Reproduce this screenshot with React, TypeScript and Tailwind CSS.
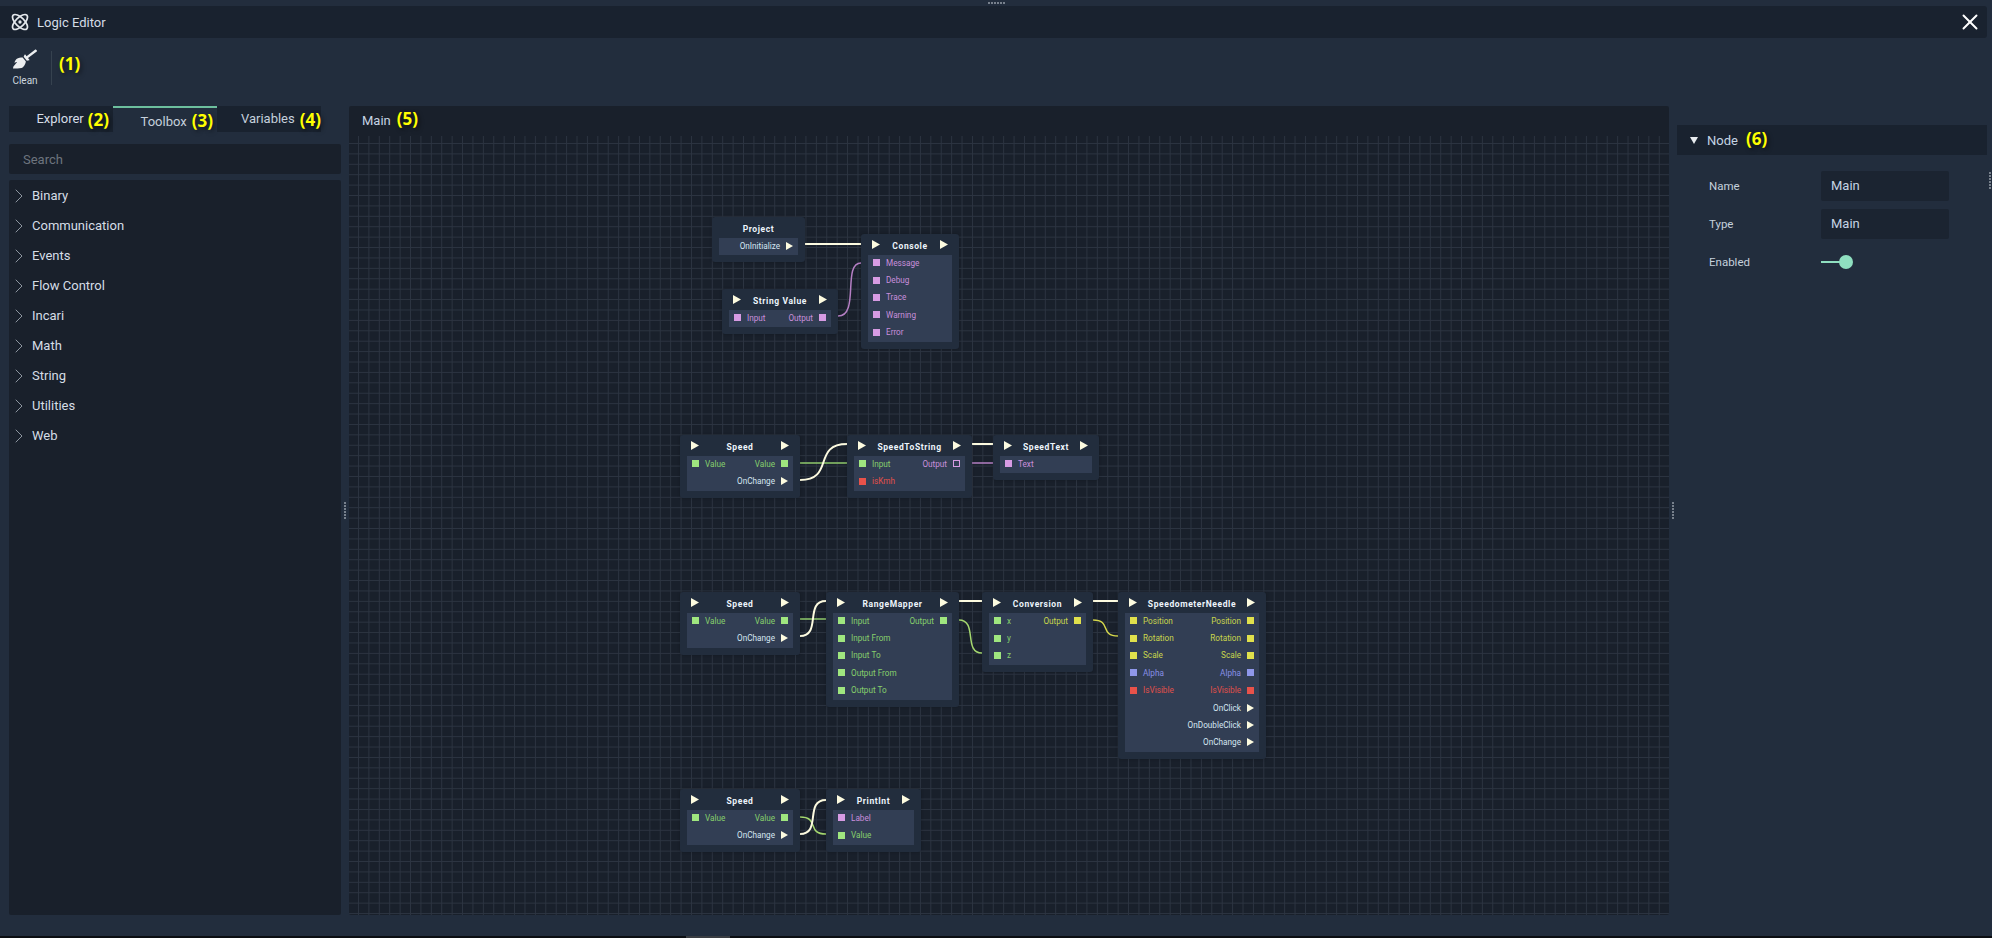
import { Atom, ChevronRight, X } from 'lucide-react';
import { FaBroom } from 'react-icons/fa';

const GREEN = '#9fe67f';
const PINK = '#d79be3';
const RED = '#e8524a';
const BLUE = '#8f97ea';
const YELLOW = '#e0e04c';

type Pin = { label: string; color?: string; text?: string; exec?: boolean; hollow?: boolean };
type Row = { left?: Pin; right?: Pin };
type NodeData = { x: number; y: number; w: number; title: string; noExec?: boolean; rows: Row[] };

const g = (label: string): Pin => ({ label, color: GREEN, text: '#86cf6c' });
const p = (label: string): Pin => ({ label, color: PINK, text: '#c98fdc' });
const y = (label: string): Pin => ({ label, color: YELLOW, text: '#c9d64c' });
const r = (label: string): Pin => ({ label, color: RED, text: '#e0504a' });
const b = (label: string): Pin => ({ label, color: BLUE, text: '#8890e6' });
const e = (label: string): Pin => ({ label, exec: true, text: '#d5e6f2' });

const speedRows: Row[] = [
  { left: g('Value'), right: g('Value') },
  { right: e('OnChange') },
];

const nodes: NodeData[] = [
  { x: 712, y: 217, w: 93, title: 'Project', noExec: true, rows: [{ right: e('OnInitialize') }] },
  { x: 861, y: 234, w: 98, title: 'Console', rows: ['Message', 'Debug', 'Trace', 'Warning', 'Error'].map((l) => ({ left: p(l) })) },
  { x: 722, y: 289, w: 116, title: 'String Value', rows: [{ left: p('Input'), right: p('Output') }] },
  { x: 680, y: 435, w: 120, title: 'Speed', rows: speedRows },
  {
    x: 847, y: 435, w: 125, title: 'SpeedToString',
    rows: [{ left: g('Input'), right: { ...p('Output'), hollow: true } }, { left: r('isKmh') }],
  },
  { x: 993, y: 435, w: 106, title: 'SpeedText', rows: [{ left: p('Text') }] },
  { x: 680, y: 592, w: 120, title: 'Speed', rows: speedRows },
  {
    x: 826, y: 592, w: 133, title: 'RangeMapper',
    rows: [
      { left: g('Input'), right: g('Output') },
      { left: g('Input From') },
      { left: g('Input To') },
      { left: g('Output From') },
      { left: g('Output To') },
    ],
  },
  {
    x: 982, y: 592, w: 111, title: 'Conversion',
    rows: [{ left: g('x'), right: y('Output') }, { left: g('y') }, { left: g('z') }],
  },
  {
    x: 1118, y: 592, w: 148, title: 'SpeedometerNeedle',
    rows: [
      { left: y('Position'), right: y('Position') },
      { left: y('Rotation'), right: y('Rotation') },
      { left: y('Scale'), right: y('Scale') },
      { left: b('Alpha'), right: b('Alpha') },
      { left: r('IsVisible'), right: r('IsVisible') },
      { right: e('OnClick') },
      { right: e('OnDoubleClick') },
      { right: e('OnChange') },
    ],
  },
  { x: 680, y: 789, w: 120, title: 'Speed', rows: speedRows },
  { x: 826, y: 789, w: 95, title: 'PrintInt', rows: [{ left: p('Label'), right: undefined }, { left: g('Value') }] },
];

// wires in page coordinates
const wires: { d: string; c: string; w?: number }[] = [
  { d: 'M805 244 L861 244', c: '#fdfbe0', w: 2 },
  { d: 'M838 316 C860 316 842 263 861 263', c: '#b57fc4' },
  { d: 'M800 463 L847 463', c: '#8fca6c' },
  { d: 'M800 480 C835 480 812 444 847 444', c: '#fdfbe0', w: 2 },
  { d: 'M972 444 L993 444', c: '#fdfbe0', w: 2 },
  { d: 'M972 463 L993 463', c: '#b57fc4' },
  { d: 'M800 619 L826 619', c: '#8fca6c' },
  { d: 'M800 636 C822 636 804 601 826 601', c: '#fdfbe0', w: 2 },
  { d: 'M959 601 L982 601', c: '#fdfbe0', w: 2 },
  { d: 'M959 620 C978 620 963 653 982 653', c: '#a5d86f' },
  { d: 'M1093 601 L1118 601', c: '#fdfbe0', w: 2 },
  { d: 'M1093 620 C1112 620 1099 636 1118 636', c: '#d5d84c' },
  { d: 'M800 817 C820 817 806 834 826 834', c: '#a5d86f' },
  { d: 'M800 834 C822 834 804 800 826 800', c: '#fdfbe0', w: 2 },
];

const categories = ['Binary', 'Communication', 'Events', 'Flow Control', 'Incari', 'Math', 'String', 'Utilities', 'Web'];

function Note({ n }: { n: number }) {
  return (
    <span className="font-['Open_Sans',sans-serif] text-[17px] font-bold leading-none text-[#ffff00] [text-shadow:2px_2px_4px_rgba(0,0,0,0.5)]">
      ({n})
    </span>
  );
}

function Arrow({ size = 8 }: { size?: number }) {
  return (
    <svg width={size} height={size + 1} viewBox="0 0 8 9" className="shrink-0">
      <path d="M0 0 L8 4.5 L0 9 Z" fill="#fdfbe0" />
    </svg>
  );
}

function Port({ pin }: { pin: Pin }) {
  if (pin.exec) return <Arrow size={7} />;
  return (
    <span
      className="block h-[7px] w-[7px] shrink-0 border"
      style={{ backgroundColor: pin.hollow ? 'transparent' : pin.color, borderColor: pin.color }}
    />
  );
}

function LogicNode({ node }: { node: NodeData }) {
  return (
    <div
      className="absolute rounded-[3px] bg-[#222d3d] px-[7px] pb-[7px] shadow-[0_0_3px_rgba(0,0,0,0.25)]"
      style={{ left: node.x - 349, top: node.y - 136, width: node.w }}
    >
      <div className="flex h-[21px] items-center justify-between px-[4px]">
        {node.noExec ? <span /> : <Arrow />}
        <span className="pt-[3px] text-[8.5px] font-bold tracking-[0.6px] text-[#eef5fc]">{node.title}</span>
        {node.noExec ? <span /> : <Arrow />}
      </div>
      <div className="bg-[#323e54]">
        {node.rows.map((row, i) => (
          <div key={i} className="flex h-[17.4px] items-center justify-between px-[5px] pb-[2px] text-[8.2px]">
            {row.left ? (
              <span className="flex items-center gap-[6px]" style={{ color: row.left.text }}>
                <Port pin={row.left} />
                {row.left.label}
              </span>
            ) : (
              <span />
            )}
            {row.right ? (
              <span className="flex items-center gap-[6px]" style={{ color: row.right.text }}>
                {row.right.label}
                <Port pin={row.right} />
              </span>
            ) : null}
          </div>
        ))}
      </div>
    </div>
  );
}

function Grip({ vertical }: { vertical?: boolean }) {
  return (
    <div className={vertical ? 'flex flex-col gap-[1px]' : 'flex gap-[1px]'}>
      {[0, 1, 2, 3, 4, 5].map((i) => (
        <span key={i} className="block h-[2px] w-[2px] bg-[#77808c]" />
      ))}
    </div>
  );
}

function PropRow({ label, value }: { label: string; value: string }) {
  return (
    <div className="flex h-[30px] items-center">
      <span className="w-[144px] pl-[32px] pt-[2px] text-[11.5px] text-[#c5d0dc]">{label}</span>
      <div className="flex h-[30px] w-[128px] items-center rounded-[2px] bg-[#1b2431] pl-[10px] text-[13px] text-[#c5d4e4]">
        {value}
      </div>
    </div>
  );
}

export default function App() {
  return (
    <div className="relative flex h-[938px] w-[1992px] flex-col overflow-hidden bg-[#222d3d] font-['Roboto',sans-serif]">
      <div className="flex h-[6px] shrink-0 items-center justify-center">
        <Grip />
      </div>

      <div className="mr-[5px] flex h-[32px] shrink-0 items-center justify-between rounded-r-[3px] bg-[#19222f] pl-[10px] pr-[4px]">
        <div className="flex items-center gap-[7px]">
          <Atom size={20} className="text-[#e4e8ec]" strokeWidth={2} />
          <span className="pt-[1px] text-[13px] text-[#d5dde6]">Logic Editor</span>
        </div>
        <X size={26} strokeWidth={1.8} className="text-white" />
      </div>

      <div className="flex h-[68px] shrink-0 items-start pl-[12px] pt-[9px]">
        <div className="flex w-[26px] flex-col items-center">
          <FaBroom size={24} className="text-[#eceef0]" />
          <span className="mt-[2px] text-[10px] text-[#ccd5df]">Clean</span>
        </div>
        <div className="ml-[13px] mt-[4px] h-[34px] w-px bg-[#36424f]" />
        <div className="ml-[7px] mt-[6px]">
          <Note n={1} />
        </div>
      </div>

      <div className="flex h-[809px] shrink-0 pl-[9px]">
        <div className="flex w-[332px] shrink-0 flex-col">
          <div className="flex h-[26px] w-[312px] shrink-0">
            <div className="flex w-[104px] items-center justify-end gap-[4px] bg-[#19222f] pr-[4px] text-[13px] text-[#d5dde6]">
              Explorer <Note n={2} />
            </div>
            <div className="flex w-[104px] items-center justify-end gap-[5px] border-t-[2px] border-[#6dbf9e] pr-[4px] text-[13px] text-[#c5d0dc]">
              <span className="pt-[4px]">Toolbox</span> <Note n={3} />
            </div>
            <div className="flex w-[104px] items-center justify-end gap-[5px] bg-[#19222f] text-[13px] text-[#c5d0dc]">
              Variables <Note n={4} />
            </div>
          </div>
          <div className="mt-[12px] flex h-[30px] shrink-0 items-center rounded-[2px] bg-[#19202b] pl-[14px] pt-[2px] text-[13px] text-[#6d747e]">
            Search
          </div>
          <div className="mt-[6px] flex-1 rounded-[2px] bg-[#19202b] pt-[1px]">
            {categories.map((c) => (
              <div key={c} className="flex h-[30px] items-center text-[13px] text-[#d5dde6]">
                <ChevronRight size={24} strokeWidth={0.9} className="ml-[-2px] mr-[1px] text-[#9aa3ad]" />
                {c}
              </div>
            ))}
          </div>
        </div>

        <div className="flex w-[8px] shrink-0 items-center justify-center">
          <Grip vertical />
        </div>

        <div className="flex w-[1320px] shrink-0 flex-col overflow-hidden rounded-[2px] bg-[#19202b]">
          <div className="flex h-[30px] shrink-0 items-center gap-[6px] pl-[13px] text-[13px] text-[#c5d4e4]">
            Main
            <span className="pb-[1px]">
              <Note n={5} />
            </span>
          </div>
          <div className="relative flex-1 bg-[linear-gradient(to_right,#2c3441_1px,transparent_1px),linear-gradient(to_bottom,#2c3441_1px,transparent_1px)] bg-[size:10.42px_10.42px] bg-[position:9px_7px]">
            <svg className="absolute inset-0" width={1320} height={779} viewBox="349 136 1320 779" fill="none">
              {wires.map((wire, i) => (
                <path key={i} d={wire.d} stroke={wire.c} strokeWidth={wire.w ?? 1.5} />
              ))}
            </svg>
            {nodes.map((n, i) => (
              <LogicNode key={i} node={n} />
            ))}
          </div>
        </div>

        <div className="flex w-[8px] shrink-0 items-center justify-center">
          <Grip vertical />
        </div>

        <div className="w-[310px] shrink-0 pt-[19px]">
          <div className="flex h-[30px] items-center bg-[#19222f] pl-[13px] text-[13px] text-[#c5d4e4]">
            <svg width="8" height="7" viewBox="0 0 8 7" className="mr-[9px]">
              <path d="M0 0 H8 L4 7 Z" fill="#e8ecef" />
            </svg>
            <span className="pt-[1px]">Node</span>
            <span className="ml-[8px] pt-[1px]">
              <Note n={6} />
            </span>
          </div>
          <div className="mt-[16px] flex flex-col gap-[8px]">
            <PropRow label="Name" value="Main" />
            <PropRow label="Type" value="Main" />
          </div>
          <div className="mt-[8px] flex h-[30px] items-center">
            <span className="w-[144px] pl-[32px] pt-[1px] text-[11.5px] text-[#c5d0dc]">Enabled</span>
            <div className="relative h-[2px] w-[26px] bg-[#8fdfc0]">
              <span className="absolute left-[18px] top-[-6px] block h-[14px] w-[14px] rounded-full bg-[#8fdfc0]" />
            </div>
          </div>
        </div>
      </div>

      <div className="absolute right-[1px] top-[172px]">
        <Grip vertical />
      </div>
      <div className="absolute bottom-0 left-0 h-[2px] w-full bg-[#0b0e12]">
        <div className="ml-[686px] h-[2px] w-[44px] bg-[#3a3d42]" />
      </div>
    </div>
  );
}
